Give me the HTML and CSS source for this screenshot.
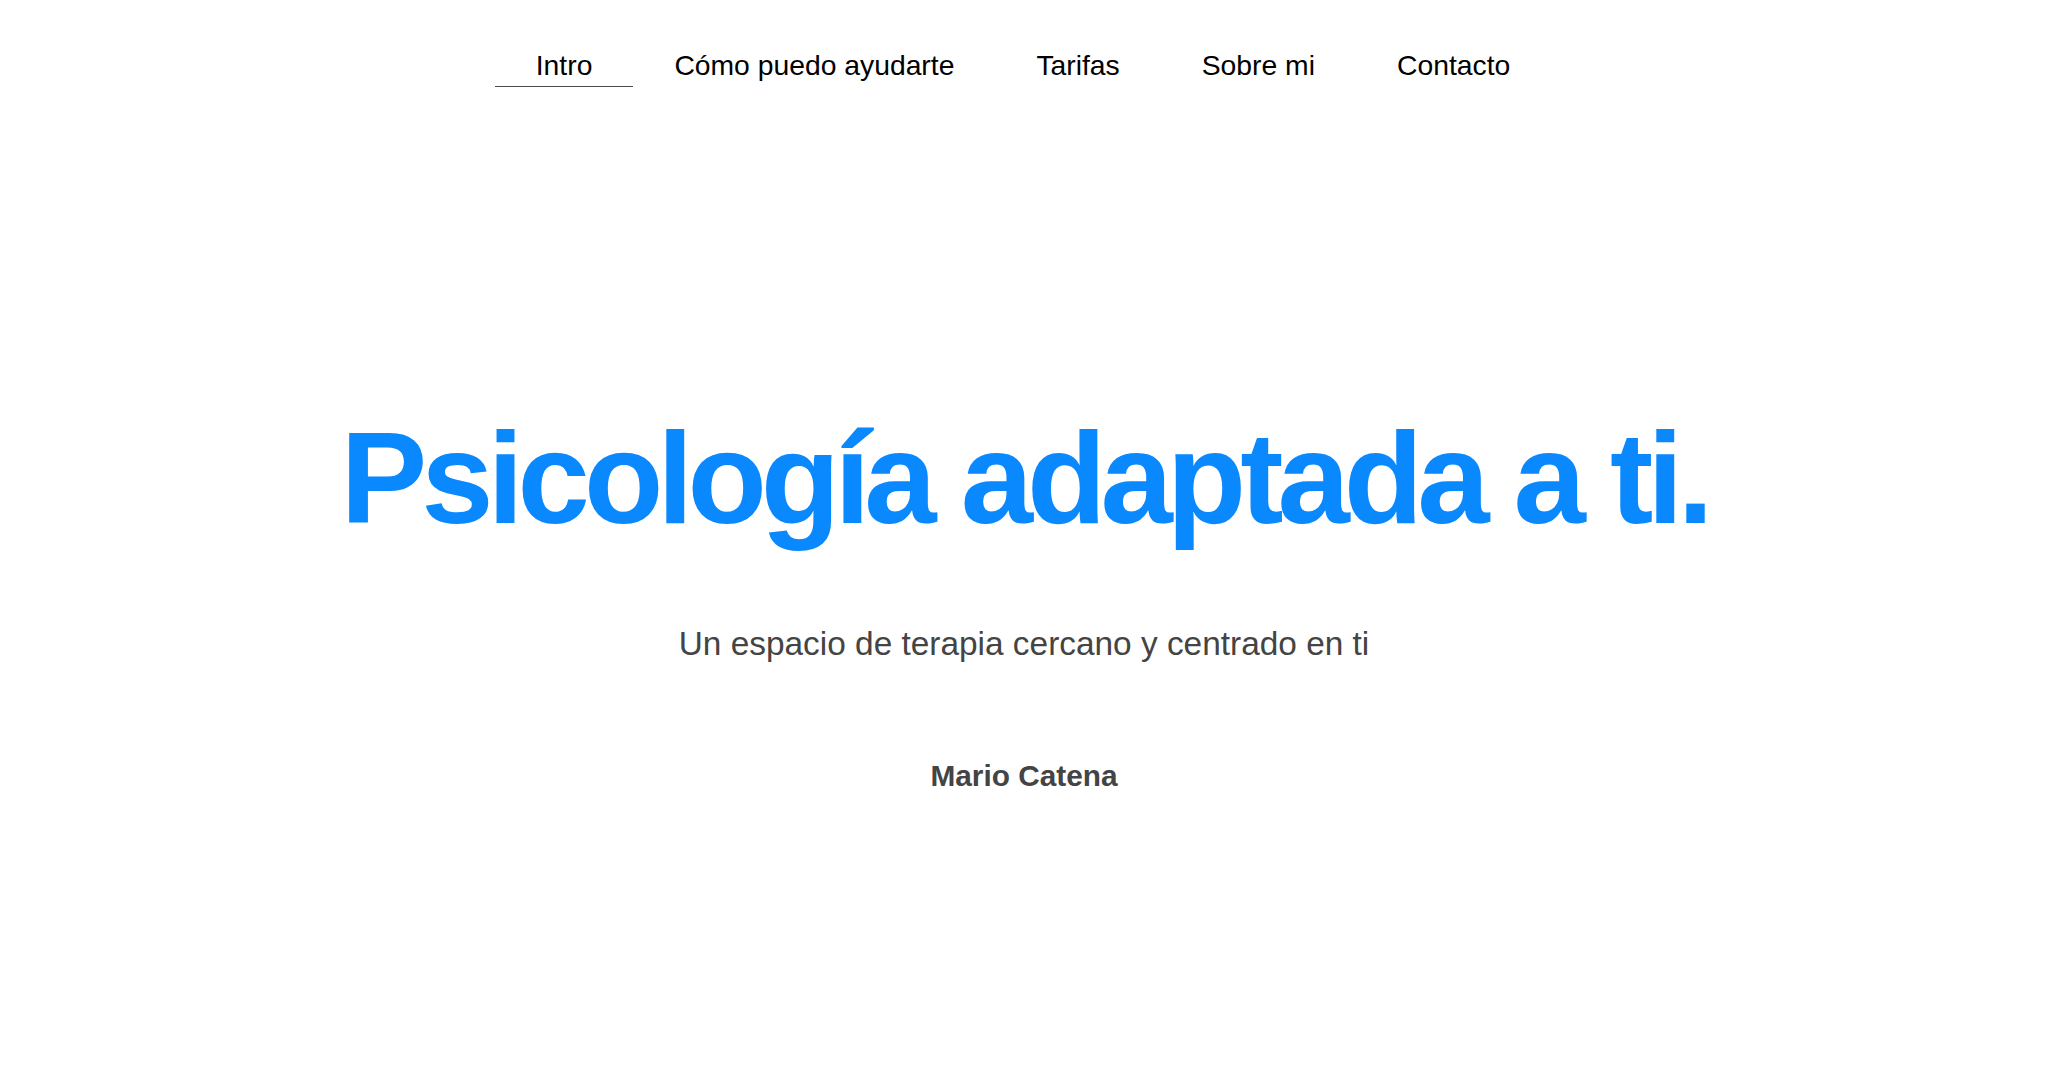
FILE: index.html
```html
<!DOCTYPE html>
<html lang="es">
<head>
<meta charset="utf-8">
<title>Psicología adaptada a ti</title>
<link rel="stylesheet" href="styles.css">
</head>
<body>
<header class="site-header">
  <nav class="nav">
    <a class="nav-link is-active" href="#intro">Intro</a>
    <a class="nav-link" href="#ayuda">Cómo puedo ayudarte</a>
    <a class="nav-link" href="#tarifas">Tarifas</a>
    <a class="nav-link" href="#sobre">Sobre mi</a>
    <a class="nav-link" href="#contacto">Contacto</a>
  </nav>
</header>
<main class="hero" id="intro">
  <h1 class="hero-title">Psicología adaptada a ti.</h1>
  <p class="hero-subtitle">Un espacio de terapia cercano y centrado en ti</p>
  <p class="hero-name">Mario Catena</p>
</main>
</body>
</html>
```
FILE: styles.css
```css
html, body {
  margin: 0;
  padding: 0;
  background: #ffffff;
}

body {
  font-family: "Liberation Sans", Arial, Helvetica, sans-serif;
  color: #000;
  width: 2048px;
  height: 1089px;
  overflow: hidden;
}

.site-header {
  padding-top: 51px;
}

.nav {
  display: flex;
  justify-content: center;
  padding-right: 2px;
}

.nav-link {
  display: block;
  font-size: 28.3px;
  line-height: 28px;
  padding: 0 41px 7px;
  color: #000;
  text-decoration: none;
  border-bottom: 1px solid transparent;
}

.nav-link.is-active {
  border-bottom-color: #4a4a4a;
}

.hero {
  padding-top: 326px;
  display: flex;
  flex-direction: column;
  align-items: center;
  text-align: center;
}

.hero-title {
  margin: 0;
  font-size: 130px;
  line-height: 130px;
  font-weight: 700;
  letter-spacing: -6px;
  color: #0a89ff;
}

.hero-subtitle {
  margin: 84px 0 0;
  font-size: 33.4px;
  line-height: 33px;
  color: #444444;
}

.hero-name {
  margin: 101px 0 0;
  font-size: 29.8px;
  line-height: 29px;
  font-weight: 700;
  color: #444444;
}
```
